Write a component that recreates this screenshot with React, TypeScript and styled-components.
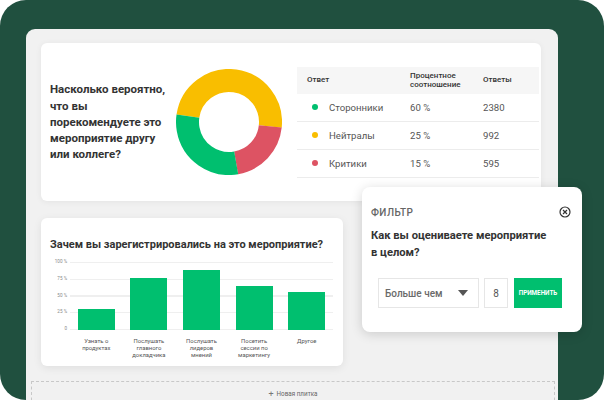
import React from "react";
import styled, { createGlobalStyle } from "styled-components";

const GlobalStyle = createGlobalStyle`
  html, body {
    margin: 0;
    padding: 0;
    background: #ffffff;
  }
  body {
    font-family: Roboto, "Noto Sans", Arial, sans-serif;
    color: #333;
  }
`;

const GREEN = "#00bf6f";
const YELLOW = "#f9be00";
const RED = "#dd5363";

const tableRows = [
  { color: GREEN, label: "Сторонники", pct: "60 %", count: "2380" },
  { color: YELLOW, label: "Нейтралы", pct: "25 %", count: "992" },
  { color: RED, label: "Критики", pct: "15 %", count: "595" },
];

const bars = [
  { value: 31, label: ["Узнать о", "продуктах"] },
  { value: 78, label: ["Послушать", "главного", "докладчика"] },
  { value: 90, label: ["Послушать", "лидеров", "мнений"] },
  { value: 66, label: ["Посетить", "сессии по", "маркетингу"] },
  { value: 57, label: ["Другое"] },
];

// clockwise from 12 o'clock, in degrees
const segments = [
  { color: YELLOW, start: 278, sweep: 178 },
  { color: RED, start: 96, sweep: 74 },
  { color: GREEN, start: 170, sweep: 108 },
];

const Donut = () => {
  const r = 41.5;
  const c = 2 * Math.PI * r;
  return (
    <DonutSvg width="106" height="106" viewBox="0 0 106 106">
      {segments.map((s) => (
        <circle
          key={s.color}
          cx="53"
          cy="53"
          r={r}
          fill="none"
          stroke={s.color}
          strokeWidth="23"
          strokeDasharray={`${(s.sweep / 360) * c} ${c}`}
          transform={`rotate(${s.start - 90} 53 53)`}
        />
      ))}
    </DonutSvg>
  );
};

const CloseIcon = () => (
  <svg width="12" height="12" viewBox="0 0 12 12">
    <circle cx="6" cy="6" r="5" fill="none" stroke="#333" strokeWidth="1.2" />
    <path d="M4 4 L8 8 M8 4 L4 8" stroke="#333" strokeWidth="1.2" />
  </svg>
);

const App = () => {
  return (
    <>
      <GlobalStyle />
      <Frame>
        <Panel>
          <TopCard>
            <Question>
              Насколько вероятно,
              <br />
              что вы
              <br />
              порекомендуете это
              <br />
              мероприятие другу
              <br />
              или коллеге?
            </Question>
            <Donut />
            <Table>
              <HeadRow>
                <HeadCell $first>Ответ</HeadCell>
                <HeadCell>
                  Процентное
                  <br />
                  соотношение
                </HeadCell>
                <HeadCell>Ответы</HeadCell>
              </HeadRow>
              {tableRows.map((row) => (
                <BodyRow key={row.label}>
                  <LabelCell>
                    <Dot $color={row.color} />
                    {row.label}
                  </LabelCell>
                  <Cell>{row.pct}</Cell>
                  <Cell>{row.count}</Cell>
                </BodyRow>
              ))}
            </Table>
          </TopCard>

          <ChartCard>
            <ChartTitle>Зачем вы зарегистрировались на это мероприятие?</ChartTitle>
            <Chart>
              <Axis>
                <span>100 %</span>
                <span>75 %</span>
                <span>50 %</span>
                <span>25 %</span>
                <span>0</span>
              </Axis>
              <Plot>
                {bars.map((b, i) => (
                  <Bar key={i} style={{ height: `${(b.value / 100) * 67}px` }} />
                ))}
              </Plot>
              <span />
              <XLabels>
                {bars.map((b, i) => (
                  <XLabel key={i}>
                    {b.label.map((l) => (
                      <div key={l}>{l}</div>
                    ))}
                  </XLabel>
                ))}
              </XLabels>
            </Chart>
          </ChartCard>

          <NewTile>
            <Plus>+</Plus> Новая плитка
          </NewTile>
        </Panel>

        <FilterPopup>
          <FilterHeader>
            <FilterTitle>ФИЛЬТР</FilterTitle>
            <CloseIcon />
          </FilterHeader>
          <FilterQuestion>
            Как вы оцениваете мероприятие
            <br />в целом?
          </FilterQuestion>
          <Controls>
            <Select>
              Больше чем
              <Caret />
            </Select>
            <NumberBox>8</NumberBox>
            <ApplyButton>ПРИМЕНИТЬ</ApplyButton>
          </Controls>
        </FilterPopup>
      </Frame>
    </>
  );
};

export default App;

const Frame = styled.div`
  position: relative;
  width: 604px;
  height: 400px;
  box-sizing: border-box;
  padding: 29px 46px 0 26px;
  background: #20503f;
  border-radius: 26px;
  overflow: hidden;
`;

const Panel = styled.div`
  height: 100%;
  box-sizing: border-box;
  padding: 14px 17px 0 15px;
  background: #f1f1f1;
  border-radius: 9px 9px 0 0;
`;

const TopCard = styled.div`
  display: flex;
  align-items: center;
  height: 158px;
  box-sizing: border-box;
  padding: 0 2px 0 9px;
  background: #fff;
  border-radius: 6px;
  box-shadow: 0 1px 6px rgba(0, 0, 0, 0.06);
`;

const Question = styled.div`
  width: 126px;
  flex-shrink: 0;
  font-size: 11.5px;
  font-weight: 700;
  line-height: 16.3px;
  color: #333;
`;

const DonutSvg = styled.svg`
  flex-shrink: 0;
  display: block;
`;

const Table = styled.div`
  margin-left: 15px;
  width: 242px;
`;

const HeadRow = styled.div`
  display: grid;
  grid-template-columns: 113px 73px 1fr;
  align-items: center;
  height: 27px;
  background: #f6f6f6;
`;

const HeadCell = styled.div<{ $first?: boolean }>`
  padding-left: ${(p) => (p.$first ? "10px" : "0")};
  font-size: 8px;
  font-weight: 500;
  line-height: 9.5px;
  color: #333;
`;

const BodyRow = styled.div`
  display: grid;
  grid-template-columns: 113px 73px 1fr;
  align-items: center;
  height: 27px;
  border-bottom: 1px solid #ececec;
  font-size: 9.6px;
  color: #555;
`;

const LabelCell = styled.div`
  display: flex;
  align-items: center;
  gap: 11px;
  padding-left: 15px;
`;

const Cell = styled.div``;

const Dot = styled.span<{ $color: string }>`
  width: 6px;
  height: 6px;
  border-radius: 50%;
  background: ${(p) => p.$color};
`;

const ChartCard = styled.div`
  width: 302px;
  height: 148px;
  box-sizing: border-box;
  margin-top: 17px;
  padding: 20px 10px 0 9px;
  background: #fff;
  border-radius: 6px;
  box-shadow: 0 2px 8px rgba(0, 0, 0, 0.08);
`;

const ChartTitle = styled.div`
  font-size: 11px;
  font-weight: 700;
  line-height: 14px;
  color: #333;
  white-space: nowrap;
`;

const Chart = styled.div`
  display: grid;
  grid-template-columns: 17px 1fr;
  grid-template-rows: 68px auto;
  column-gap: 3px;
  margin-top: 10px;
`;

const Axis = styled.div`
  display: flex;
  flex-direction: column;
  justify-content: space-between;
  align-items: flex-end;
  margin: -3px 0 -2px;
  font-size: 4.6px;
  line-height: 6px;
  color: #888;
  white-space: nowrap;
`;

const Plot = styled.div`
  display: grid;
  grid-template-columns: repeat(5, 1fr);
  align-items: end;
  justify-items: center;
  background: repeating-linear-gradient(
    to bottom,
    #efefef 0 1px,
    transparent 1px 16.75px
  );
`;

const Bar = styled.div`
  width: 37px;
  background: ${GREEN};
`;

const XLabels = styled.div`
  display: grid;
  grid-template-columns: repeat(5, 1fr);
  margin-top: 8px;
`;

const XLabel = styled.div`
  text-align: center;
  font-size: 5.9px;
  line-height: 6.8px;
  color: #555;
`;

const NewTile = styled.div`
  display: flex;
  justify-content: center;
  align-items: center;
  gap: 3px;
  height: 24px;
  margin: 15px -14px 0 -10px;
  border: 1px dashed #c8c8c8;
  border-bottom: none;
  font-size: 6.3px;
  color: #666;
`;

const Plus = styled.span`
  font-size: 9px;
  color: #777;
`;

const FilterPopup = styled.div`
  position: absolute;
  left: 362px;
  top: 187px;
  width: 220px;
  height: 145px;
  box-sizing: border-box;
  padding: 18px 11px 0 9px;
  background: #fff;
  border-radius: 8px;
  box-shadow: 0 2px 12px rgba(0, 0, 0, 0.16);
`;

const FilterHeader = styled.div`
  display: flex;
  justify-content: space-between;
  align-items: center;
  height: 14px;
`;

const FilterTitle = styled.div`
  font-size: 10px;
  font-weight: 500;
  letter-spacing: 0.4px;
  color: #666;
`;

const FilterQuestion = styled.div`
  margin-top: 8px;
  font-size: 11.2px;
  font-weight: 700;
  line-height: 17px;
  color: #333;
`;

const Controls = styled.div`
  display: flex;
  gap: 5px;
  margin: 17px 0 0 7px;
`;

const Select = styled.div`
  display: flex;
  align-items: center;
  justify-content: space-between;
  width: 101px;
  height: 30px;
  box-sizing: border-box;
  padding: 0 10px 0 6px;
  border: 1px solid #e6e6e6;
  font-size: 10px;
  font-weight: 500;
  color: #6a6a6a;
`;

const Caret = styled.span`
  width: 0;
  height: 0;
  border-left: 5px solid transparent;
  border-right: 5px solid transparent;
  border-top: 6px solid #555;
`;

const NumberBox = styled.div`
  display: flex;
  align-items: center;
  justify-content: center;
  width: 24px;
  height: 30px;
  box-sizing: border-box;
  border: 1px solid #e6e6e6;
  font-size: 10px;
  color: #555;
`;

const ApplyButton = styled.div`
  display: flex;
  align-items: center;
  justify-content: center;
  width: 48px;
  height: 30px;
  margin-left: 1px;
  background: ${GREEN};
  font-size: 6.3px;
  font-weight: 700;
  color: #fff;
`;
